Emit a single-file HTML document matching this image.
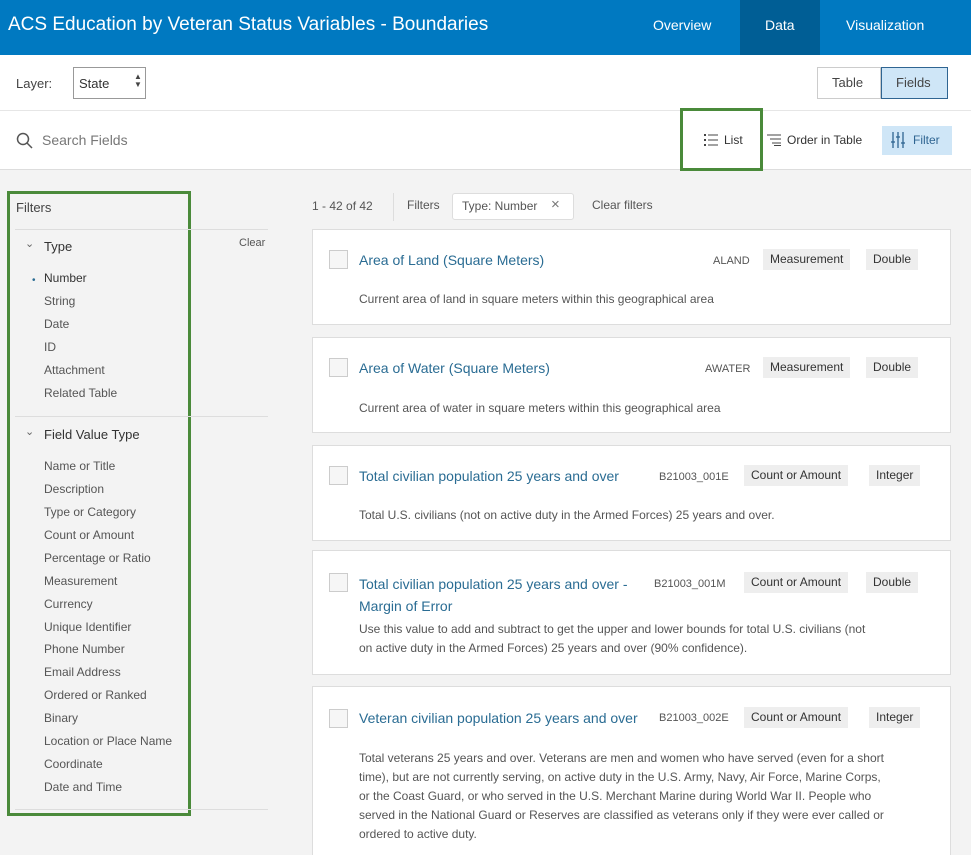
<!DOCTYPE html>
<html><head><meta charset="utf-8"><style>
*{margin:0;padding:0;box-sizing:border-box}
html,body{width:971px;height:855px;overflow:hidden}
body{background:#f3f3f3;font-family:"Liberation Sans",sans-serif;color:#444;position:relative}
.a{position:absolute;white-space:nowrap}
.card{position:absolute;left:312px;width:639px;background:#fff;border:1px solid #ddd}
.cb{position:absolute;left:16px;width:19px;height:19px;border:1px solid #ccc;background:#f6f6f6}
.t{position:absolute;left:46px;font-size:14px;color:#2a6c93;line-height:22px;white-space:nowrap}
.code{position:absolute;font-size:11px;color:#555}
.tag{position:absolute;background:#eee;font-size:12px;color:#333;padding:3px 7px;height:21px;white-space:nowrap}
.d{position:absolute;left:46px;font-size:12px;color:#555;line-height:22.5px;white-space:nowrap}
.li{font-size:12px;color:#555;position:absolute;left:44px}
</style></head><body>
<div class="a" style="left:0;top:0;width:971px;height:55px;background:#0079c1"></div>
<div class="a" style="left:740px;top:0;width:80px;height:55px;background:#005e95"></div>
<div class="a" style="left:8px;top:14px;font-size:19px;color:#fff">ACS Education by Veteran Status Variables - Boundaries</div>
<div class="a" style="left:653px;top:17px;font-size:14px;color:#fff">Overview</div>
<div class="a" style="left:765px;top:17px;font-size:14px;color:#fff">Data</div>
<div class="a" style="left:846px;top:17px;font-size:14px;color:#fff">Visualization</div>
<div class="a" style="left:0;top:55px;width:971px;height:115px;background:#fff"></div>
<div class="a" style="left:0;top:110px;width:971px;height:1px;background:#e6e6e6"></div>
<div class="a" style="left:0;top:169px;width:971px;height:1px;background:#ddd"></div>
<div class="a" style="left:16px;top:76px;font-size:13px;color:#444">Layer:</div>
<div class="a" style="left:73px;top:67px;width:73px;height:32px;border:1px solid #999;background:#fff"></div>
<div class="a" style="left:79px;top:76px;font-size:13px;color:#333">State</div>
<div class="a" style="left:134px;top:73px;font-size:8px;color:#444;line-height:8px">▲<br>▼</div>
<div class="a" style="left:817px;top:67px;width:64px;height:32px;border:1px solid #ccc;background:#fff"></div>
<div class="a" style="left:881px;top:67px;width:67px;height:32px;border:1px solid #2f6592;background:#cfe6f7"></div>
<div class="a" style="left:832px;top:75px;font-size:13px;color:#444">Table</div>
<div class="a" style="left:896px;top:75px;font-size:13px;color:#444">Fields</div>
<svg class="a" style="left:16px;top:132px" width="17" height="17"><circle cx="7" cy="7" r="5.5" fill="none" stroke="#555" stroke-width="1.5"/><line x1="11" y1="11" x2="16" y2="16" stroke="#555" stroke-width="1.5"/></svg>
<div class="a" style="left:42px;top:132px;font-size:14px;color:#777">Search Fields</div>
<div class="a" style="left:680px;top:108px;width:83px;height:63px;border:3px solid #4a8a3a"></div>
<svg class="a" style="left:704px;top:133px" width="14" height="13"><g fill="#444"><rect x="0" y="1" width="2" height="2"/><rect x="0" y="6" width="2" height="2"/><rect x="0" y="11" width="2" height="2"/><rect x="4" y="1.5" width="10" height="1"/><rect x="4" y="6.5" width="10" height="1"/><rect x="4" y="11.5" width="10" height="1"/></g></svg>
<div class="a" style="left:724px;top:133px;font-size:12px;color:#333">List</div>
<svg class="a" style="left:767px;top:133px" width="14" height="13"><g fill="#444"><rect x="0" y="1.5" width="14" height="1"/><rect x="3" y="5.5" width="11" height="1"/><rect x="5" y="9.5" width="9" height="1"/><rect x="7" y="12" width="7" height="1"/></g></svg>
<div class="a" style="left:787px;top:133px;font-size:12px;color:#333">Order in Table</div>
<div class="a" style="left:882px;top:126px;width:70px;height:29px;background:#cfe6f7"></div>
<svg class="a" style="left:891px;top:132px" width="14" height="16"><g stroke="#2f6592" stroke-width="1.3"><line x1="2" y1="0" x2="2" y2="16"/><line x1="7" y1="0" x2="7" y2="16"/><line x1="12" y1="0" x2="12" y2="16"/><line x1="0" y1="10" x2="4" y2="10"/><line x1="5" y1="5" x2="9" y2="5"/><line x1="10" y1="11" x2="14" y2="11"/></g></svg>
<div class="a" style="left:913px;top:133px;font-size:12px;color:#2f6592">Filter</div>

<div class="a" style="left:7px;top:191px;width:184px;height:625px;border:3px solid #4a8a3a"></div>
<div class="a" style="left:16px;top:200px;font-size:13px;color:#444">Filters</div>
<div class="a" style="left:15px;top:229px;width:253px;height:1px;background:#ddd"></div>
<div class="a" style="left:25px;top:237px;font-size:11px;color:#666">⌄</div>
<div class="a" style="left:44px;top:239px;font-size:13px;color:#333">Type</div>
<div class="a" style="left:239px;top:237px;font-size:11px;color:#555">Clear</div>
<div class="a" style="left:32px;top:275px;font-size:10px;color:#2a6c93">•</div>
<div class="li" style="top:271px;color:#333">Number</div>
<div class="li" style="top:294px">String</div>
<div class="li" style="top:317px">Date</div>
<div class="li" style="top:340px">ID</div>
<div class="li" style="top:363px">Attachment</div>
<div class="li" style="top:386px">Related Table</div>
<div class="a" style="left:15px;top:416px;width:253px;height:1px;background:#ddd"></div>
<div class="a" style="left:25px;top:425px;font-size:11px;color:#666">⌄</div>
<div class="a" style="left:44px;top:427px;font-size:13px;color:#333">Field Value Type</div>
<div class="li" style="top:459px">Name or Title</div>
<div class="li" style="top:482px">Description</div>
<div class="li" style="top:505px">Type or Category</div>
<div class="li" style="top:528px">Count or Amount</div>
<div class="li" style="top:551px">Percentage or Ratio</div>
<div class="li" style="top:574px">Measurement</div>
<div class="li" style="top:597px">Currency</div>
<div class="li" style="top:620px">Unique Identifier</div>
<div class="li" style="top:642px">Phone Number</div>
<div class="li" style="top:665px">Email Address</div>
<div class="li" style="top:688px">Ordered or Ranked</div>
<div class="li" style="top:711px">Binary</div>
<div class="li" style="top:734px">Location or Place Name</div>
<div class="li" style="top:757px">Coordinate</div>
<div class="li" style="top:780px">Date and Time</div>
<div class="a" style="left:15px;top:809px;width:253px;height:1px;background:#ddd"></div>

<div class="a" style="left:312px;top:199px;font-size:12px;color:#555">1 - 42 of 42</div>
<div class="a" style="left:393px;top:193px;width:1px;height:28px;background:#ddd"></div>
<div class="a" style="left:407px;top:198px;font-size:12px;color:#555">Filters</div>
<div class="a" style="left:452px;top:193px;width:122px;height:27px;background:#fff;border:1px solid #ddd;border-radius:3px"></div>
<div class="a" style="left:462px;top:199px;font-size:12px;color:#555">Type: Number</div>
<div class="a" style="left:551px;top:196px;font-size:15px;color:#777">×</div>
<div class="a" style="left:592px;top:198px;font-size:12px;color:#555">Clear filters</div>

<div class="card" style="top:229px;height:96px">
<div class="cb" style="top:20px"></div><div class="t" style="top:19px">Area of Land (Square Meters)</div>
<div class="code" style="left:400px;top:25px">ALAND</div>
<div class="tag" style="left:450px;top:19px">Measurement</div><div class="tag" style="left:553px;top:19px">Double</div>
<div class="d" style="top:58px">Current area of land in square meters within this geographical area</div></div>

<div class="card" style="top:337px;height:96px">
<div class="cb" style="top:20px"></div><div class="t" style="top:19px">Area of Water (Square Meters)</div>
<div class="code" style="left:392px;top:25px">AWATER</div>
<div class="tag" style="left:450px;top:19px">Measurement</div><div class="tag" style="left:553px;top:19px">Double</div>
<div class="d" style="top:59px">Current area of water in square meters within this geographical area</div></div>

<div class="card" style="top:445px;height:96px">
<div class="cb" style="top:20px"></div><div class="t" style="top:19px">Total civilian population 25 years and over</div>
<div class="code" style="left:346px;top:25px">B21003_001E</div>
<div class="tag" style="left:431px;top:19px">Count or Amount</div><div class="tag" style="left:556px;top:19px">Integer</div>
<div class="d" style="top:58px">Total U.S. civilians (not on active duty in the Armed Forces) 25 years and over.</div></div>

<div class="card" style="top:550px;height:125px">
<div class="cb" style="top:22px"></div><div class="t" style="top:22px;line-height:22px">Total civilian population 25 years and over -<br>Margin of Error</div>
<div class="code" style="left:341px;top:27px">B21003_001M</div>
<div class="tag" style="left:431px;top:21px">Count or Amount</div><div class="tag" style="left:553px;top:21px">Double</div>
<div class="d" style="top:69px;line-height:19px">Use this value to add and subtract to get the upper and lower bounds for total U.S. civilians (not<br>on active duty in the Armed Forces) 25 years and over (90% confidence).</div></div>

<div class="card" style="top:686px;height:180px">
<div class="cb" style="top:22px"></div><div class="t" style="top:20px">Veteran civilian population 25 years and over</div>
<div class="code" style="left:346px;top:25px">B21003_002E</div>
<div class="tag" style="left:431px;top:20px">Count or Amount</div><div class="tag" style="left:556px;top:20px">Integer</div>
<div class="d" style="top:62px;line-height:19px">Total veterans 25 years and over. Veterans are men and women who have served (even for a short<br>time), but are not currently serving, on active duty in the U.S. Army, Navy, Air Force, Marine Corps,<br>or the Coast Guard, or who served in the U.S. Merchant Marine during World War II. People who<br>served in the National Guard or Reserves are classified as veterans only if they were ever called or<br>ordered to active duty.</div></div>
</body></html>
